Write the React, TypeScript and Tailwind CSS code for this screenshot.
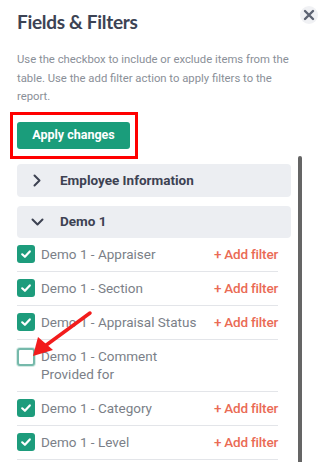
import React from "react";

const rows: { label: string; checked: boolean; filter: boolean }[] = [
  { label: "Demo 1 - Appraiser", checked: true, filter: true },
  { label: "Demo 1 - Section", checked: true, filter: true },
  { label: "Demo 1 - Appraisal Status", checked: true, filter: true },
  { label: "Demo 1 - Comment Provided for", checked: false, filter: false },
  { label: "Demo 1 - Category", checked: true, filter: true },
  { label: "Demo 1 - Level", checked: true, filter: true },
];

function Check({ checked }: { checked: boolean }) {
  if (checked) {
    return (
      <div className="w-[18px] h-[18px] shrink-0 rounded-[3px] bg-[#1d9c7c] flex items-center justify-center">
        <svg width="12" height="12" viewBox="0 0 12 12" fill="none">
          <path d="M2.2 6.3 L4.9 8.8 L9.8 3.4" stroke="white" strokeWidth="2.2" strokeLinecap="round" strokeLinejoin="round" />
        </svg>
      </div>
    );
  }
  return (
    <div className="w-[18px] h-[18px] shrink-0 rounded-[3px] border-2 border-[#76b9ab] bg-white shadow-[0_0_0_1px_#d5ebe5]" />
  );
}

export default function App() {
  return (
    <div
      className="relative w-[328px] h-[462px] overflow-hidden bg-white"
      style={{ fontFamily: "Roboto, 'Liberation Sans', sans-serif" }}
    >
      <div className="flex items-start justify-between pl-[17px] pr-[10px] pt-[8px]">
        <h1
          className="text-[19px] leading-[28px] font-bold tracking-[-0.3px] text-[#3c4354]"
          style={{ fontFamily: "Lato, 'Noto Sans', sans-serif" }}
        >
          Fields &amp; Filters
        </h1>
        <div className="w-[18px] h-[18px] rounded-full bg-[#f0f1f4] flex items-center justify-center -mt-[2px]">
          <svg width="12" height="12" viewBox="0 0 12 12">
            <path d="M2 2 L10 10 M10 2 L2 10" stroke="#5c6372" strokeWidth="2.4" strokeLinecap="round" />
          </svg>
        </div>
      </div>

      <p className="mt-[15px] ml-[17px] w-[280px] text-[11.3px] leading-[18.5px] text-[#8a8f98]">
        Use the checkbox to include or exclude items from the table. Use the add filter action to apply filters to the report.
      </p>

      <div className="ml-[10px] mt-[5px] w-[128px] border-[3px] border-[#ff0000] pl-[4px] pt-[7px] pb-[7px]">
        <button className="w-[113px] h-[27px] rounded-[3px] bg-[#1a9d7b] text-white text-[12.5px] font-bold">
          Apply changes
        </button>
      </div>

      <div className="flex gap-[7px] pl-[17px] mt-[-3px]">
        <div className="w-[274px] pt-[8px]">
          <div className="h-[33px] rounded-[4px] bg-[#eceef2] flex items-center">
            <svg className="ml-[16px]" width="8" height="13" viewBox="0 0 8 13">
              <path d="M1.5 1.5 L6.5 6.5 L1.5 11.5" stroke="#3d4252" strokeWidth="2" fill="none" strokeLinecap="round" strokeLinejoin="round" />
            </svg>
            <span className="ml-[19px] text-[13.5px] font-bold text-[#3d4252]">Employee Information</span>
          </div>
          <div className="mt-[9px] h-[32px] rounded-[4px] bg-[#eceef2] flex items-center">
            <svg className="ml-[14px]" width="13" height="8" viewBox="0 0 13 8">
              <path d="M1.5 1.5 L6.5 6.5 L11.5 1.5" stroke="#3d4252" strokeWidth="2" fill="none" strokeLinecap="round" strokeLinejoin="round" />
            </svg>
            <span className="ml-[16px] text-[13.5px] font-bold text-[#3d4252]">Demo 1</span>
          </div>
          <div className="w-[261px]">
            {rows.map((r) => (
              <div
                key={r.label}
                className={`flex justify-between border-b border-[#e3e5e9] ${r.filter ? "h-[34px] items-center" : "items-start pt-[8px] pb-[8px]"}`}
              >
                <div className={`flex gap-[6px] ${r.filter ? "items-center" : "items-start"}`}>
                  <Check checked={r.checked} />
                  <span className={`text-[13.5px] text-[#7b7f88] ${r.filter ? "" : "w-[160px] leading-[18px] -mt-[1px]"}`}>
                    {r.label}
                  </span>
                </div>
                {r.filter && (
                  <span className="text-[13.5px] font-medium tracking-[-0.2px] text-[#ea6b55]">+ Add filter</span>
                )}
              </div>
            ))}
          </div>
        </div>
        <div className="w-[4px] self-stretch h-[400px] rounded-t-[2px] bg-[#656565]" />
      </div>

      <svg className="absolute left-0 top-0 pointer-events-none" width="328" height="462">
        <line x1="90" y1="313" x2="45" y2="346" stroke="#f21c1c" strokeWidth="3.5" strokeLinecap="round" />
        <polygon points="33,356 38,337 53,350" fill="#f21c1c" />
      </svg>
    </div>
  );
}
